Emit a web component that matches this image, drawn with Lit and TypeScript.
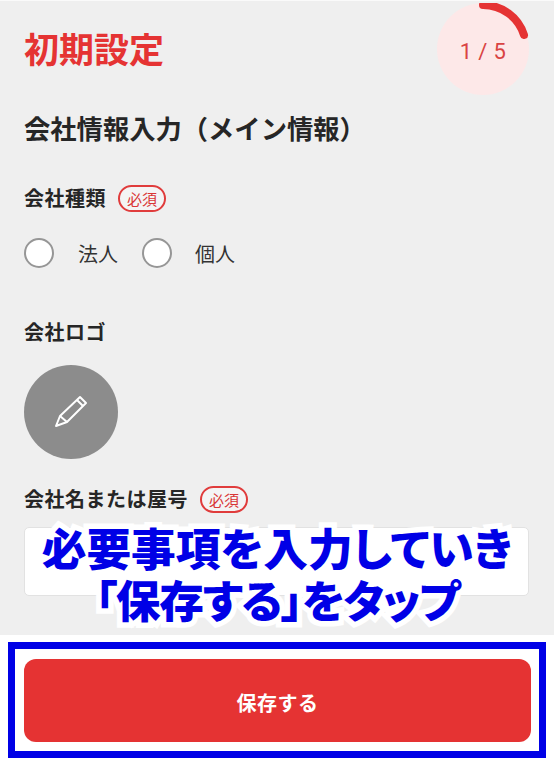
import { LitElement, html, css } from "lit";
import { customElement } from "lit/decorators.js";

@customElement("app-root")
export class AppRoot extends LitElement {
  static styles = css`
    :host {
      display: block;
      width: 554px;
      height: 758px;
      overflow: hidden;
      font-family: "Noto Sans CJK JP", "Noto Sans", sans-serif;
      color: #262626;
    }
    .app {
      position: relative;
      height: 758px;
      display: flex;
      flex-direction: column;
      background: #fff;
    }
    main {
      flex: 1;
      box-sizing: border-box;
      background: #efefef;
      border-top: 1px solid #fafafa;
      padding: 2px 25px 0 24px;
    }
    header {
      display: flex;
      justify-content: space-between;
      align-items: center;
      height: 92px;
    }
    h1 {
      margin: 0;
      padding-bottom: 2px;
      font-size: 35px;
      line-height: 44px;
      font-weight: 700;
      color: #e53333;
    }
    .progress {
      position: relative;
      width: 92px;
      height: 92px;
      display: flex;
      align-items: center;
      justify-content: center;
      font-family: "Roboto", "Noto Sans", sans-serif;
      font-size: 22px;
      color: #d94343;
      padding-top: 4px;
      box-sizing: border-box;
    }
    .progress svg {
      position: absolute;
      inset: 0;
    }
    .progress span {
      position: relative;
      letter-spacing: 0.4px;
    }
    h2 {
      margin: 15px 0 0;
      font-size: 26.3px;
      line-height: 36px;
      font-weight: 700;
    }
    .label {
      display: flex;
      align-items: center;
      height: 26px;
      font-size: 20px;
      font-weight: 700;
      letter-spacing: 0.5px;
    }
    .label .text {
      position: relative;
      top: -1px;
    }
    .type-label { margin-top: 39px; }
    .logo-label { margin-top: 51px; }
    .name-label { margin-top: 27px; }
    .badge {
      box-sizing: border-box;
      width: 48px;
      height: 27px;
      margin-left: 12px;
      border: 2px solid #e03c3c;
      border-radius: 14px;
      display: flex;
      align-items: center;
      justify-content: center;
      font-size: 15px;
      font-weight: 400;
      letter-spacing: 0;
      color: #d93636;
      background: #f4f4f4;
    }
    .radios {
      display: flex;
      align-items: center;
      height: 30px;
      margin-top: 27px;
      font-size: 20px;
      color: #333;
    }
    .radio {
      box-sizing: border-box;
      width: 30px;
      height: 30px;
      border-radius: 50%;
      border: 2.5px solid #969696;
      background: #fff;
    }
    .radios .t1 { margin-left: 24px; margin-right: 24px; }
    .radios .t2 { margin-left: 23px; }
    .avatar {
      width: 94px;
      height: 94px;
      margin-top: 20px;
      border-radius: 50%;
      background: #8c8c8c;
      display: flex;
      align-items: center;
      justify-content: center;
    }
    .input {
      height: 69px;
      margin-top: 15px;
      box-sizing: border-box;
      background: #fff;
      border: 1px solid #e2e2e2;
      border-radius: 5px;
    }
    footer {
      height: 123px;
      box-sizing: border-box;
      padding: 24px 23px 16px 24px;
      background: #fff;
    }
    .save {
      display: flex;
      align-items: center;
      justify-content: center;
      height: 83px;
      padding-top: 3px;
      box-sizing: border-box;
      border-radius: 12px;
      background: #e53333;
      color: #fff;
      font-size: 20px;
      font-weight: 700;
      letter-spacing: 0.5px;
    }
    .frame {
      position: absolute;
      left: 8px;
      top: 642px;
      width: 538px;
      height: 116px;
      box-sizing: border-box;
      border: 7px solid #0000e6;
      pointer-events: none;
    }
    .caption {
      position: absolute;
      left: 0;
      right: 0;
      top: 521px;
      text-align: center;
      font-size: 44.7px;
      line-height: 52px;
      font-weight: 900;
      font-feature-settings: "palt";
      color: #0000e6;
      -webkit-text-stroke: 11px #fff;
      paint-order: stroke fill;
      white-space: nowrap;
    }
    .caption .tight {
      letter-spacing: -1.4px;
    }
  `;

  render() {
    return html`
      <div class="app">
        <main>
          <header>
            <h1>初期設定</h1>
            <div class="progress">
              <svg width="92" height="92" viewBox="0 0 92 92">
                <circle cx="46" cy="46" r="46" fill="#fde8e8"></circle>
                <path d="M46 2 A43 43 0 0 1 87 32" fill="none" stroke="#e53333" stroke-width="8" stroke-linecap="round"></path>
              </svg>
              <span>1 / 5</span>
            </div>
          </header>
          <h2>会社情報入力（メイン情報）</h2>
          <div class="label type-label"><span class="text">会社種類</span><span class="badge">必須</span></div>
          <div class="radios">
            <span class="radio"></span><span class="t1">法人</span>
            <span class="radio"></span><span class="t2">個人</span>
          </div>
          <div class="label logo-label"><span class="text">会社ロゴ</span></div>
          <div class="avatar">
            <svg width="34" height="34" viewBox="0 0 34 34" fill="none" stroke="#fff" stroke-width="2" stroke-linejoin="round">
              <path d="M2 31 L6 21 L26 2 L32 8 L13 27 Z"></path>
              <path d="M6 21 L13 27 M23 5 L29 11"></path>
            </svg>
          </div>
          <div class="label name-label"><span class="text">会社名または屋号</span><span class="badge">必須</span></div>
          <div class="input"></div>
        </main>
        <footer><div class="save">保存する</div></footer>
        <div class="frame"></div>
        <div class="caption">必要事項を入力していき<br /><span class="tight">「保存する」をタップ</span></div>
      </div>
    `;
  }
}
